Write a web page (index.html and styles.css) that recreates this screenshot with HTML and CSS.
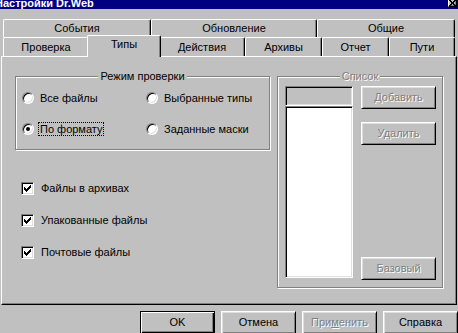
FILE: index.html
```html
<!DOCTYPE html>
<html lang="ru">
<head>
<meta charset="utf-8">
<title>Настройки Dr.Web</title>
<link rel="stylesheet" href="styles.css">
</head>
<body>
<div class="window">
  <div class="titlebar">
    <span class="title">Настройки Dr.Web</span>
    <span class="close"><svg width="7" height="6" viewBox="0 0 7 6" shape-rendering="crispEdges"><path d="M0 0h2v1h-2zM5 0h2v1h-2zM1 1h2v1h-2zM4 1h2v1h-2zM2 2h3v1h-3zM2 3h3v1h-3zM1 4h2v1h-2zM4 4h2v1h-2zM0 5h2v1h-2zM5 5h2v1h-2z" fill="#000"/></svg></span>
  </div>

  <div class="tabs">
    <div class="tabrow back">
      <div class="tab">События</div>
      <div class="tab">Обновление</div>
      <div class="tab">Общие</div>
    </div>
    <div class="tabrow front">
      <div class="tab">Проверка</div>
      <div class="tab active">Типы</div>
      <div class="tab">Действия</div>
      <div class="tab">Архивы</div>
      <div class="tab">Отчет</div>
      <div class="tab">Пути</div>
    </div>
  </div>

  <div class="panel">
    <div class="left">
      <fieldset class="group mode">
        <legend>Режим проверки</legend>
        <div class="radios">
          <div class="opt"><span class="radio"></span><span class="lbl">Все файлы</span></div>
          <div class="opt"><span class="radio"></span><span class="lbl">Выбранные типы</span></div>
          <div class="opt"><span class="radio checked"></span><span class="lbl focus">По формату</span></div>
          <div class="opt"><span class="radio"></span><span class="lbl">Заданные маски</span></div>
        </div>
      </fieldset>
      <div class="checks">
        <div class="chk-row"><span class="check"><svg width="13" height="13" viewBox="0 0 13 13" shape-rendering="crispEdges"><path d="M3 5h1v3h-1zM4 6h1v3h-1zM5 7h1v3h-1zM6 6h1v3h-1zM7 5h1v3h-1zM8 4h1v3h-1zM9 3h1v3h-1z" fill="#000"/></svg></span><span class="lbl">Файлы в архивах</span></div>
        <div class="chk-row"><span class="check"><svg width="13" height="13" viewBox="0 0 13 13" shape-rendering="crispEdges"><path d="M3 5h1v3h-1zM4 6h1v3h-1zM5 7h1v3h-1zM6 6h1v3h-1zM7 5h1v3h-1zM8 4h1v3h-1zM9 3h1v3h-1z" fill="#000"/></svg></span><span class="lbl">Упакованные файлы</span></div>
        <div class="chk-row"><span class="check"><svg width="13" height="13" viewBox="0 0 13 13" shape-rendering="crispEdges"><path d="M3 5h1v3h-1zM4 6h1v3h-1zM5 7h1v3h-1zM6 6h1v3h-1zM7 5h1v3h-1zM8 4h1v3h-1zM9 3h1v3h-1z" fill="#000"/></svg></span><span class="lbl">Почтовые файлы</span></div>
      </div>
    </div>

    <fieldset class="group list">
      <legend class="disabled">Список</legend>
      <div class="list-inner">
        <div class="list-col">
          <div class="edit"></div>
          <div class="listbox"></div>
        </div>
        <div class="btn-col">
          <button class="btn disabled">Добавить</button>
          <button class="btn disabled">Удалить</button>
          <button class="btn disabled base">Базовый</button>
        </div>
      </div>
    </fieldset>
  </div>

  <div class="buttons">
    <button class="btn default">OK</button>
    <button class="btn">Отмена</button>
    <button class="btn disabled">При<u>м</u>енить</button>
    <button class="btn">Справка</button>
  </div>
</div>
</body>
</html>
```
FILE: styles.css
```css
* { box-sizing: border-box; }
html, body { margin: 0; padding: 0; }
body {
  width: 458px;
  height: 333px;
  overflow: hidden;
  background: #c0c0c0;
  font: 11px/13px "Liberation Sans", Arial, sans-serif;
  color: #000;
}

.titlebar {
  height: 9px;
  background: #000080;
  display: flex;
  justify-content: space-between;
  align-items: flex-start;
  overflow: hidden;
}
.title {
  color: #fff;
  font-weight: bold;
  line-height: 9px;
  margin: -1px 0 0 -5px;
  white-space: nowrap;
}
.close {
  width: 9px;
  height: 7px;
  margin-right: 1px;
  background: #c0c0c0;
  border-right: 1px solid #000;
  border-bottom: 1px solid #000;
  border-left: 1px solid #fff;
  box-shadow: inset -1px -1px #808080;
  display: flex;
  justify-content: center;
  align-items: flex-start;
  padding-top: 0;
}
.close svg { display: block; }

.tabs { padding: 10px 3px 0; }
.tabrow { display: grid; }
.back { grid-template-columns: 148px 166px 138px; height: 18px; }
.front { grid-template-columns: 86px 70px 86px 77px 67px 66px; height: 19px; }
.tab {
  background: #c0c0c0;
  border-top: 1px solid #fff;
  border-left: 1px solid #fff;
  border-right: 1px solid #000;
  box-shadow: inset -1px 0 #808080;
  border-radius: 2px 2px 0 0;
  text-align: center;
  white-space: nowrap;
}
.back .tab { line-height: 17px; }
.front .tab { line-height: 18px; }
.front .tab.active {
  margin: -2px -2px -1px;
  line-height: 16px;
  position: relative;
  z-index: 2;
}

.panel {
  margin: 0 1px;
  height: 249px;
  border: 1px solid;
  border-color: #fff #000 #000 #fff;
  box-shadow: inset -1px -1px #808080;
  display: grid;
  grid-template-columns: 255px 166px;
  column-gap: 7px;
  align-items: start;
  padding: 13px 0 0 13px;
}

.group {
  margin: 0;
  padding: 0;
  min-width: 0;
  border: 1px solid #808080;
  box-shadow: 1px 1px 0 #fff, inset 1px 1px 0 #fff;
}
.group legend {
  margin: 0 auto;
  padding: 0 2px;
  line-height: 13px;
  background: #c0c0c0;
}

.radios {
  display: grid;
  grid-template-columns: 124px auto;
  row-gap: 17px;
  padding: 8px 0 13px 6px;
}
.opt, .chk-row {
  display: flex;
  align-items: center;
  height: 14px;
  white-space: nowrap;
}
.radio {
  flex: none;
  width: 12px;
  height: 12px;
  border-radius: 50%;
  background: #fff;
  border: 1px solid;
  border-color: #808080 #fff #fff #808080;
  box-shadow: inset 1px 1px 0 #000, inset -1px -1px 0 #dfdfdf;
  margin-right: 4px;
  display: flex;
  align-items: center;
  justify-content: center;
}
.radio.checked::after {
  content: "";
  width: 4px;
  height: 4px;
  border-radius: 50%;
  background: #000;
}
.lbl {
  border: 1px dotted transparent;
  padding: 0 1px;
  line-height: 12px;
}
.lbl.focus { border-color: #000; }

.checks {
  display: flex;
  flex-direction: column;
  gap: 18px;
  margin-top: 31px;
  padding-left: 6px;
}
.check {
  flex: none;
  width: 13px;
  height: 13px;
  margin-right: 5px;
  background: #fff;
  border: 1px solid;
  border-color: #808080 #fff #fff #808080;
  box-shadow: inset 1px 1px 0 #000, inset -1px -1px 0 #dfdfdf;
  position: relative;
}
.check svg { display: block; margin: -1px; }

.list-inner {
  display: flex;
  padding: 3px 6px 9px 7px;
}
.list-col {
  width: 68px;
  display: flex;
  flex-direction: column;
}
.edit, .listbox {
  border: 1px solid;
  border-color: #808080 #fff #fff #808080;
  box-shadow: inset 1px 1px 0 #000, inset -1px -1px 0 #dfdfdf;
}
.edit { height: 20px; background: #c0c0c0; }
.listbox { height: 172px; background: #fff; }
.btn-col {
  width: 75px;
  margin-left: 8px;
  display: flex;
  flex-direction: column;
  gap: 13px;
}
.btn-col .base { margin-top: auto; margin-bottom: -2px; }

.btn {
  width: 75px;
  height: 23px;
  padding: 0;
  margin: 0;
  font: inherit;
  color: #000;
  background: #c0c0c0;
  border: 1px solid;
  border-color: #fff #000 #000 #fff;
  box-shadow: inset 1px 1px 0 #dfdfdf, inset -1px -1px 0 #808080;
  border-radius: 0;
  text-align: center;
}
.btn.default {
  border-color: #000;
  box-shadow: inset 1px 1px 0 #fff, inset -1px -1px 0 #000, inset -2px -2px 0 #808080;
}
.disabled {
  color: #808080;
  text-shadow: 1px 1px 0 #fff;
}

.buttons {
  display: flex;
  justify-content: flex-end;
  gap: 6px;
  margin-top: 6px;
}
```
